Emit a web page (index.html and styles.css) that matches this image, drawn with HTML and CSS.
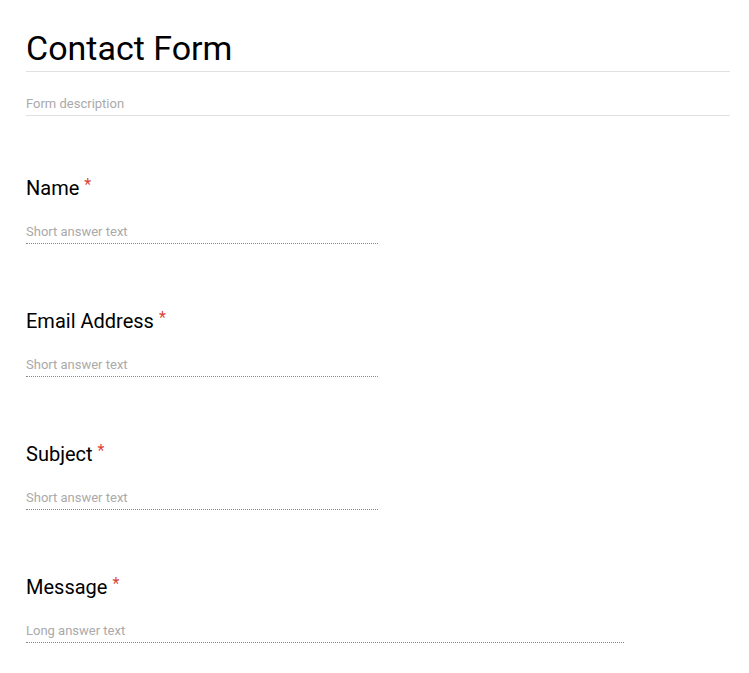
FILE: index.html
```html
<!DOCTYPE html>
<html>
<head>
<meta charset="utf-8">
<link rel="stylesheet" href="styles.css">
</head>
<body>
<div class="form">
  <div class="header">
    <div class="title">Contact Form</div>
    <div class="desc">Form description</div>
  </div>
  <div class="question">
    <div class="label">Name<span class="req">*</span></div>
    <div class="answer short">Short answer text</div>
  </div>
  <div class="question">
    <div class="label">Email Address<span class="req">*</span></div>
    <div class="answer short">Short answer text</div>
  </div>
  <div class="question">
    <div class="label">Subject<span class="req">*</span></div>
    <div class="answer short">Short answer text</div>
  </div>
  <div class="question">
    <div class="label">Message<span class="req">*</span></div>
    <div class="answer long">Long answer text</div>
  </div>
</div>
</body>
</html>
```
FILE: styles.css
```css
html, body {
  margin: 0;
  padding: 0;
  background: #fff;
}
body {
  font-family: Roboto, "Noto Sans", Arial, sans-serif;
  color: #202124;
}
.form {
  padding: 26px 19px 0 26px;
}
.header {
  margin-bottom: 60px;
}
.title {
  font-size: 34px;
  line-height: 44px;
  color: #000;
  padding-bottom: 1px;
  border-bottom: 1px solid #e0e0e0;
}
.desc {
  font-size: 13px;
  line-height: 16px;
  color: #aaaaaa;
  padding-top: 24px;
  padding-bottom: 3px;
  border-bottom: 1px solid #e0e0e0;
}
.question {
  margin-bottom: 65px;
}
.question:last-child {
  margin-bottom: 0;
}
.label {
  font-size: 20px;
  line-height: 24px;
  height: 24px;
  color: #000;
}
.req {
  color: #db4437;
  font-size: 16px;
  line-height: 18px;
  margin-left: 5px;
  vertical-align: top;
}
.answer {
  margin-top: 24px;
  font-size: 13px;
  line-height: 16px;
  color: #aaaaaa;
  padding-bottom: 3px;
  border-bottom: 1px dotted #8a8a8a;
}
.short { width: 352px; }
.long { width: 598px; }
```
